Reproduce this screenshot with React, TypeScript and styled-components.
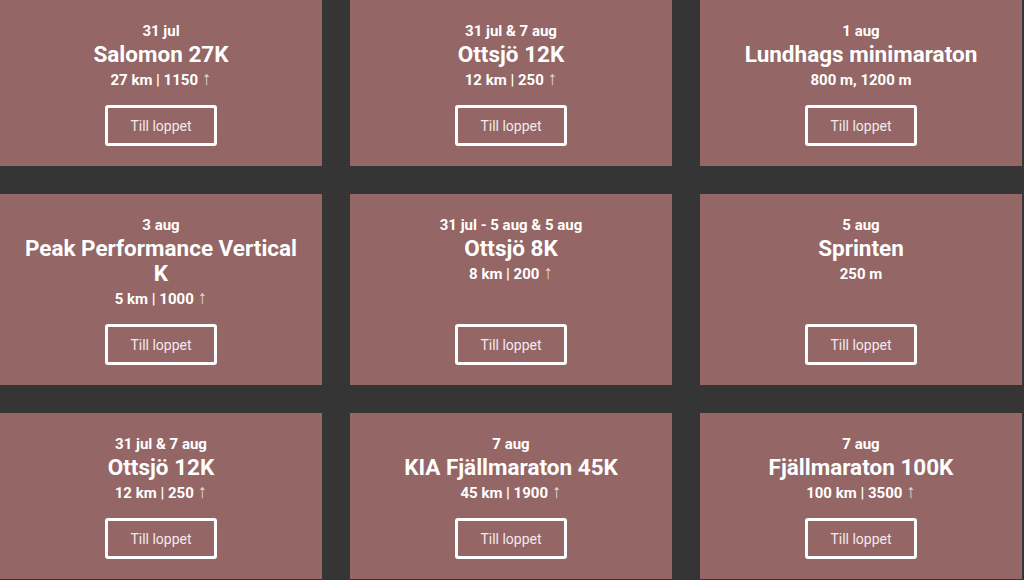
import styled, { createGlobalStyle } from "styled-components";

const GlobalStyle = createGlobalStyle`
  body {
    margin: 0;
    background: #353535;
    font-family: Roboto, "Liberation Sans", sans-serif;
    color: #fff;
  }
`;

type Race = {
  date: string;
  name: string;
  stats: string;
  climb?: boolean;
};

const RACES: Race[] = [
  { date: "31 jul", name: "Salomon 27K", stats: "27 km | 1150", climb: true },
  { date: "31 jul & 7 aug", name: "Ottsjö 12K", stats: "12 km | 250", climb: true },
  { date: "1 aug", name: "Lundhags minimaraton", stats: "800 m, 1200 m" },
  { date: "3 aug", name: "Peak Performance Vertical K", stats: "5 km | 1000", climb: true },
  { date: "31 jul - 5 aug & 5 aug", name: "Ottsjö 8K", stats: "8 km | 200", climb: true },
  { date: "5 aug", name: "Sprinten", stats: "250 m" },
  { date: "31 jul & 7 aug", name: "Ottsjö 12K", stats: "12 km | 250", climb: true },
  { date: "7 aug", name: "KIA Fjällmaraton 45K", stats: "45 km | 1900", climb: true },
  { date: "7 aug", name: "Fjällmaraton 100K", stats: "100 km | 3500", climb: true },
];

export default function App() {
  return (
    <>
      <GlobalStyle />
      <RaceGrid>
        {RACES.map((race, i) => (
          <RaceCard key={i}>
            <RaceDate>{race.date}</RaceDate>
            <RaceName>{race.name}</RaceName>
            <RaceStats>
              {race.stats}
              {race.climb && <Arrow>↑</Arrow>}
            </RaceStats>
            <RaceButton href="#">Till loppet</RaceButton>
          </RaceCard>
        ))}
      </RaceGrid>
    </>
  );
}

const RaceGrid = styled.div`
  display: grid;
  grid-template-columns: repeat(3, 322px);
  gap: 28px;
`;

const RaceCard = styled.div`
  display: flex;
  flex-direction: column;
  align-items: center;
  text-align: center;
  padding: 20px 20px;
  background: #946666;
`;

const RaceDate = styled.div`
  font-size: 15px;
  font-weight: 700;
  line-height: 22px;
`;

const RaceName = styled.h3`
  margin: 0;
  font-size: 22.5px;
  font-weight: 700;
  line-height: 25px;
`;

const RaceStats = styled.div`
  margin: 2px 0 14px;
  font-size: 15px;
  font-weight: 700;
  line-height: 22px;
`;

const Arrow = styled.span`
  margin-left: 4px;
  font-family: "Liberation Sans", sans-serif;
  font-size: 19px;
  line-height: 0;
  font-weight: 400;
  color: #e6d6d6;
`;

const RaceButton = styled.a`
  margin-top: auto;
  box-sizing: border-box;
  display: flex;
  align-items: center;
  justify-content: center;
  width: 112px;
  height: 41px;
  border: 3px solid #fff;
  border-radius: 3px;
  color: #f2eaea;
  font-size: 14px;
  text-decoration: none;
`;
